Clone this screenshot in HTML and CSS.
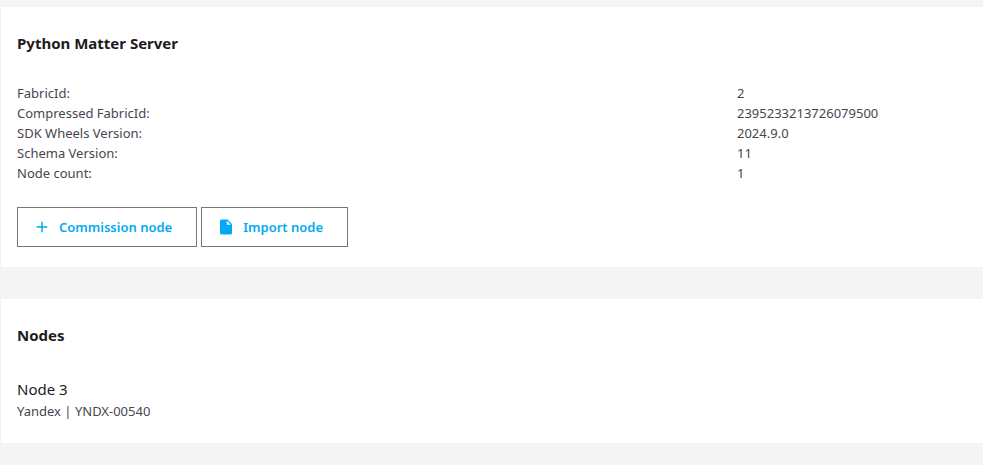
FILE: index.html
```html
<!DOCTYPE html>
<html lang="en">

<head>
    <meta charset="UTF-8">
    <meta name="viewport" content="width=device-width, initial-scale=1.0">
    <title>Python Matter Server</title>
    <link rel="stylesheet" href="styles.css">
</head>

<body>
    <main class="dashboard">
        <section class="card">
            <h1 class="card-title">Python Matter Server</h1>
            <table class="details">
                <tr><th scope="row">FabricId:</th><td>2</td></tr>
                <tr><th scope="row">Compressed FabricId:</th><td>2395233213726079500</td></tr>
                <tr><th scope="row">SDK Wheels Version:</th><td>2024.9.0</td></tr>
                <tr><th scope="row">Schema Version:</th><td>11</td></tr>
                <tr><th scope="row">Node count:</th><td>1</td></tr>
            </table>
            <div class="actions">
                <button class="button" type="button">
                    <svg class="icon" viewBox="0 0 24 24" aria-hidden="true">
                        <path d="M19,13H13V19H11V13H5V11H11V5H13V11H19V13Z" />
                    </svg>
                    Commission node
                </button>
                <button class="button" type="button">
                    <svg class="icon" viewBox="0 0 24 24" aria-hidden="true">
                        <path d="M13,9V3.5L18.5,9M6,2C4.89,2 4,2.89 4,4V20A2,2 0 0,0 6,22H18A2,2 0 0,0 20,20V8L14,2H6Z" />
                    </svg>
                    Import node
                </button>
            </div>
        </section>

        <section class="card">
            <h2 class="card-title">Nodes</h2>
            <ul class="node-list">
                <li class="node">
                    <div class="node-name">Node 3</div>
                    <div class="node-info">Yandex | YNDX-00540</div>
                </li>
            </ul>
        </section>
    </main>
</body>

</html>
```

FILE: styles.css
```css
* {
    margin: 0;
    padding: 0;
    box-sizing: border-box;
}

body {
    font-family: "Noto Sans", "Open Sans", sans-serif;
    font-size: 13px;
    line-height: 20px;
    color: #49454f;
    background: #f4f4f4;
}

.dashboard {
    display: flex;
    flex-direction: column;
    gap: 32px;
    padding: 7px 0 22px 1px;
}

.card {
    padding: 24px 16px 20px;
    background: #fff;
}

.card-title {
    margin-bottom: 28px;
    font-size: 15px;
    line-height: 24px;
    font-weight: 700;
    color: #1d1b20;
}

/* Server details */
.details {
    width: 100%;
    border-collapse: collapse;
    table-layout: fixed;
}

.details th {
    width: 720px;
    font-weight: 400;
    text-align: left;
}

.actions {
    display: flex;
    gap: 4px;
    margin-top: 24px;
}

.button {
    display: flex;
    align-items: center;
    gap: 8px;
    height: 40px;
    padding: 0 24px 0 15px;
    font-family: inherit;
    font-size: 13px;
    font-weight: 600;
    line-height: 20px;
    color: #03a9f4;
    background: #fff;
    border: 1px solid #79747e;
    cursor: pointer;
}

.icon {
    width: 18px;
    height: 18px;
    fill: currentColor;
}

/* Node list */
.node-list {
    list-style: none;
}

.node {
    padding: 2px 0;
}

.node-name {
    font-size: 15px;
    line-height: 24px;
    color: #1d1b20;
}
```
